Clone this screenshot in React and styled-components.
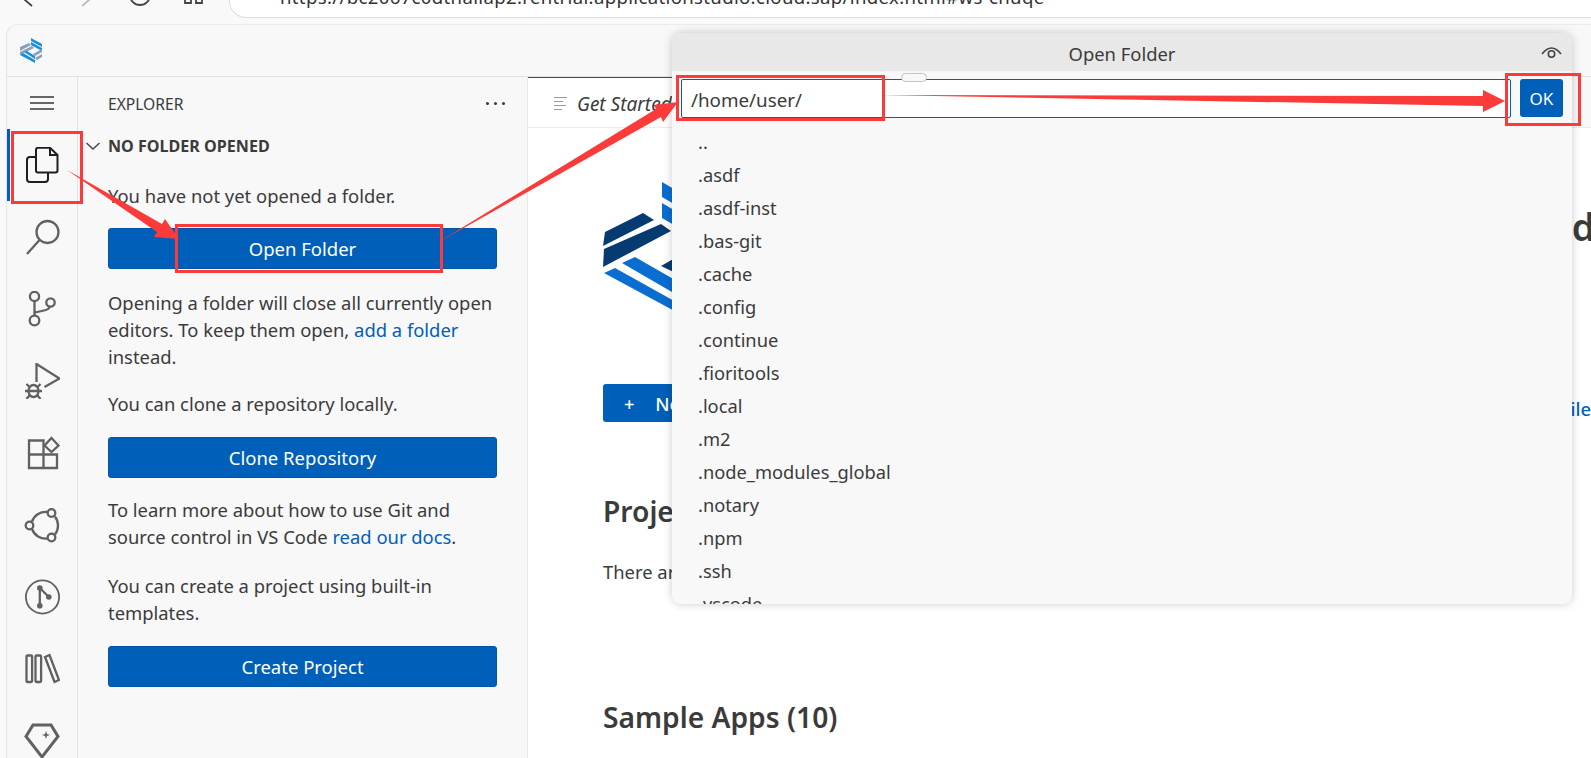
import React from "react";
import styled, { createGlobalStyle } from "styled-components";

const Global = createGlobalStyle`
  html, body { margin: 0; padding: 0; background: #f9f9f9; }
  body { font-family: "Noto Sans", "Open Sans", sans-serif; color: #3b3b3b; }
  * { box-sizing: border-box; }
`;

const Page = styled.div`
  position: relative;
  width: 1591px;
  height: 758px;
  overflow: hidden;
  display: flex;
  flex-direction: column;
  background: #f9f9f9;
`;

const BrowserBar = styled.div`
  height: 24px;
  flex: none;
  display: flex;
  align-items: flex-start;
  padding-left: 23px;
`;
const NavIcon = styled.svg`
  flex: none;
  width: 24px;
  height: 24px;
  margin-left: ${(p) => p.$gap || 0}px;
  margin-top: -12px;
  fill: none;
  stroke: ${(p) => p.$color || "#444"};
  stroke-width: 1.8;
`;
const UrlBar = styled.div`
  flex: none;
  margin-left: 23px;
  width: 1400px;
  height: 18px;
  background: #fff;
  border: 1px solid #dcdcdc;
  border-top: 0;
  border-right: 0;
  border-radius: 0 0 0 17px;
  overflow: hidden;
  display: flex;
  align-items: flex-end;
  padding: 0 0 8px 10px;
`;
const UrlIcon = styled.svg`
  flex: none;
  width: 20px;
  height: 20px;
  margin-bottom: -5px;
  fill: none;
  stroke: #444;
  stroke-width: 1.8;
`;
const UrlText = styled.span`
  margin-left: 20px;
  font-size: 18.6px;
  line-height: 24px;
  white-space: nowrap;
  color: #333;
  letter-spacing: 0.33px;
`;

const Frame = styled.div`
  flex: 1;
  min-height: 0;
  margin-left: 6px;
  border-top: 1px solid #ebebeb;
  border-left: 1px solid #e5e5e5;
  border-radius: 12px 0 0 0;
  background: #f8f8f8;
  display: flex;
  flex-direction: column;
  overflow: hidden;
`;
const TitleBar = styled.header`
  height: 52px;
  flex: none;
  display: flex;
  align-items: center;
  padding-left: 13px;
  border-bottom: 1px solid #e2e2e2;
`;
const Body = styled.div`
  flex: 1;
  min-height: 0;
  display: flex;
`;

const ActivityBar = styled.nav`
  width: 71px;
  flex: none;
  display: flex;
  flex-direction: column;
  border-right: 1px solid #e2e2e2;
`;
const MenuButton = styled.div`
  height: 52px;
  flex: none;
  display: flex;
  flex-direction: column;
  justify-content: center;
  gap: 4.5px;
  padding-left: 23px;
`;
const MenuLine = styled.span`
  display: block;
  width: 24px;
  height: 1.6px;
  background: #666;
`;
const ActivityItem = styled.div`
  height: 72px;
  flex: none;
  display: flex;
  align-items: center;
  justify-content: center;
  border-left: 3px solid ${(p) => (p.$active ? "#005fb8" : "transparent")};
  padding-right: 4px;
`;
const Icon = styled.svg`
  width: 36px;
  height: 36px;
  flex: none;
  fill: none;
  stroke: ${(p) => (p.$active ? "#1e1e1e" : "#616161")};
  stroke-width: ${(p) => (p.$active ? 2 : 2.3)};
`;

const Sidebar = styled.aside`
  width: 450px;
  flex: none;
  display: flex;
  flex-direction: column;
  border-right: 1px solid #e8e8e8;
`;
const SideHeader = styled.div`
  height: 53px;
  flex: none;
  display: flex;
  align-items: center;
  justify-content: space-between;
  padding: 0 22px 0 30px;
  font-size: 15.6px;
  color: #3b3b3b;
`;
const MoreDots = styled.span`
  display: flex;
  gap: 5px;
`;
const Dot = styled.i`
  width: 3px;
  height: 3px;
  border-radius: 50%;
  background: #3b3b3b;
`;
const SectionHead = styled.div`
  height: 30px;
  flex: none;
  display: flex;
  align-items: center;
  gap: 8px;
  padding: 2px 0 0 8px;
  font-size: 16.1px;
  font-weight: 700;
  color: #3b3b3b;
`;
const Chevron = styled.svg`
  width: 14px;
  height: 10px;
  fill: none;
  stroke: #444;
  stroke-width: 1.4;
`;
const SideContent = styled.div`
  display: flex;
  flex-direction: column;
  padding: 22px 30px 0 30px;
`;
const Para = styled.p`
  margin: 0 0 ${(p) => p.$mb}px;
  font-size: 18.4px;
  line-height: 27px;
  color: #3b3b3b;
`;
const Link = styled.a`
  color: #005fb8;
  text-decoration: none;
`;
const WideButton = styled.button`
  display: block;
  flex: none;
  width: 100%;
  height: 41px;
  margin: 0 0 ${(p) => p.$mb || 0}px;
  border: 1px solid #0057a8;
  border-radius: 3px;
  background: #005fb8;
  color: #fff;
  font: 400 18.5px "Noto Sans", sans-serif;
  padding: 0;
`;

const Editor = styled.main`
  flex: 1;
  min-width: 0;
  background: #fff;
  display: flex;
  flex-direction: column;
  overflow: hidden;
`;
const TabStrip = styled.div`
  height: 51px;
  flex: none;
  background: #f8f8f8;
  display: flex;
  border-bottom: 1px solid #ececec;
`;
const Tab = styled.div`
  width: 300px;
  background: #fff;
  border-top: 1px solid #005fb8;
  display: flex;
  align-items: center;
  gap: 10px;
  padding: 2px 0 0 26px;
  font-style: italic;
  font-size: 19px;
  color: #3b3b3b;
`;
const TabLines = styled.span`
  display: flex;
  flex-direction: column;
  gap: 2.5px;
`;
const TabLine = styled.i`
  display: block;
  height: 1.6px;
  width: ${(p) => p.$w}px;
  background: #999;
`;
const EditorBody = styled.div`
  padding: 48px 0 0 75px;
  display: flex;
  flex-direction: column;
`;
const Hero = styled.div`
  display: flex;
  align-items: flex-start;
  height: 208px;
`;
const HeroLogo = styled.svg`
  flex: none;
  width: 100px;
  height: 145px;
`;
const HeroTitle = styled.h1`
  margin: 26px 0 0 128px;
  font-size: 37px;
  font-weight: 600;
  line-height: 50px;
  white-space: nowrap;
  color: #3b3b3b;
`;
const ActionsRow = styled.div`
  display: flex;
  align-items: center;
  justify-content: space-between;
  height: 38px;
  width: 997px;
`;
const NewButton = styled.button`
  height: 38px;
  width: 240px;
  border: 0;
  border-radius: 3px;
  background: #005fb8;
  color: #fff;
  font: 500 18.4px "Noto Sans", sans-serif;
  text-align: left;
  padding: 0 0 0 21px;
  word-spacing: 16px;
`;
const FileLink = styled.a`
  margin-top: 10px;
  font-size: 18.4px;
  font-weight: 500;
  color: #005fb8;
  white-space: nowrap;
`;
const SectionTitle = styled.h2`
  margin: ${(p) => p.$top}px 0 0;
  font-size: 28.2px;
  line-height: 38px;
  font-weight: 600;
  color: #3b3b3b;
  white-space: nowrap;
`;
const BodyText = styled.p`
  margin: 28px 0 0;
  font-size: 18.4px;
  line-height: 27px;
  color: #3b3b3b;
`;

const Dialog = styled.section`
  position: absolute;
  left: 672px;
  top: 33px;
  width: 900px;
  height: 571px;
  background: #f8f8f8;
  border-radius: 9px;
  box-shadow: 0 0 10px rgba(0, 0, 0, 0.2);
  display: flex;
  flex-direction: column;
  overflow: hidden;
`;
const DialogTitle = styled.div`
  position: relative;
  height: 38px;
  flex: none;
  background: #e8e8e8;
  display: flex;
  align-items: center;
  justify-content: center;
  padding-top: 2px;
  font-size: 18.4px;
  color: #3b3b3b;
`;
const EyeIcon = styled.svg`
  position: absolute;
  right: 10px;
  top: 12px;
  width: 21px;
  height: 14px;
  fill: none;
  stroke: #444;
  stroke-width: 1.6;
`;
const Handle = styled.div`
  position: absolute;
  left: 229px;
  top: 40px;
  width: 26px;
  height: 9px;
  background: #f8f8f8;
  border: 1px solid #c4c4c4;
  border-radius: 5px;
`;
const InputRow = styled.div`
  flex: none;
  display: flex;
  gap: 9px;
  padding: 8px 9px 0;
`;
const PathInput = styled.div`
  flex: 1;
  height: 39px;
  background: #fff;
  border: 1px solid #005fb8;
  border-radius: 2px;
  display: flex;
  align-items: center;
  padding: 2px 0 0 9px;
  font-size: 18.8px;
  color: #3b3b3b;
`;
const OkButton = styled.button`
  flex: none;
  width: 43px;
  height: 38px;
  border: 0;
  border-radius: 3px;
  background: #005fb8;
  color: #fff;
  font: 400 17px "Noto Sans", sans-serif;
  padding: 0;
`;
const FolderList = styled.ul`
  list-style: none;
  margin: 6.5px 0 0;
  padding: 0;
  flex: 1;
  min-height: 0;
  overflow: hidden;
`;
const FolderRow = styled.li`
  height: 33px;
  line-height: 33px;
  padding-left: 26px;
  font-size: 18.3px;
  color: #3b3b3b;
`;

const Annotations = styled.svg`
  position: absolute;
  inset: 0;
  width: 1591px;
  height: 758px;
  pointer-events: none;
`;
const RedBox = styled.rect`
  fill: none;
  stroke: #fb3a3a;
  stroke-width: 3;
`;
const RedArrow = styled.polygon`
  fill: #fb3a3a;
`;

const TitleLogo = styled.svg`
  width: 25px;
  height: 26px;
`;

const folders = ["..", ".asdf", ".asdf-inst", ".bas-git", ".cache", ".config", ".continue", ".fioritools", ".local", ".m2", ".node_modules_global", ".notary", ".npm", ".ssh", ".vscode"];

export default function App() {
  return (
    <Page>
      <Global />
      <BrowserBar>
        <NavIcon viewBox="0 0 24 24"><path d="M9 6 L2 12 L9 18" /></NavIcon>
        <NavIcon $gap={31} $color="#bbb" viewBox="0 0 24 24"><path d="M4 6 L11 12 L4 18" /></NavIcon>
        <NavIcon $gap={26} viewBox="0 0 24 24"><circle cx="12" cy="7" r="10" /></NavIcon>
        <NavIcon $gap={30} viewBox="0 0 24 24"><path d="M3 4 V15 H9 V4 M14 4 V15 H20 V4" /></NavIcon>
        <UrlBar>
          <UrlIcon viewBox="0 0 20 20"><rect x="1" y="-6" width="17" height="11" rx="3" /></UrlIcon>
          <UrlText>https://bc2067c0dthaliap2.rentrial.applicationstudio.cloud.sap/index.html#ws-cnuqe</UrlText>
        </UrlBar>
      </BrowserBar>
      <Frame>
        <TitleBar>
          <TitleLogo viewBox="0 0 25 26">
            <polygon fill="#1a8fdc" points="11,0 22,6 22,9 11,3" />
            <polygon fill="#1a8fdc" points="11,4 22,10 22,13 11,7" />
            <polygon fill="#8aa0b8" points="0,9 9,5 11,7 0,13" />
            <polygon fill="#8aa0b8" points="0,14 12,8 14,10 0,17" />
            <polygon fill="#1a8fdc" points="0,17 3,15 15,22 15,25" />
            <polygon fill="#1a8fdc" points="4,14 7,13 15,18 15,21" />
            <polygon fill="#8aa0b8" points="13,16 22,11 22,14 15,18" />
            <polygon fill="#8aa0b8" points="15,20 22,16 22,19 17,22" />
          </TitleLogo>
        </TitleBar>
        <Body>
          <ActivityBar>
            <MenuButton><MenuLine /><MenuLine /><MenuLine /></MenuButton>
            <ActivityItem $active>
              <Icon $active viewBox="0 0 36 36">
                <path d="M14 0.8 H26 L33.5 8 V23.5 a2 2 0 0 1 -2 2 H14 a2 2 0 0 1 -2 -2 V2.8 a2 2 0 0 1 2 -2z" />
                <path d="M26 0.8 V8 H33.5" />
                <path d="M12 10 H6 a3 3 0 0 0 -3 3 V32 a3 3 0 0 0 3 3 H21 a3 3 0 0 0 3 -3 V25.5" />
              </Icon>
            </ActivityItem>
            <ActivityItem>
              <Icon viewBox="0 0 36 36">
                <circle cx="23.5" cy="13" r="11" />
                <path d="M15.5 21 L3 35" />
              </Icon>
            </ActivityItem>
            <ActivityItem>
              <Icon viewBox="0 0 36 36">
                <circle cx="10.5" cy="5.5" r="4.6" />
                <circle cx="26.5" cy="11.5" r="4.2" />
                <circle cx="10.5" cy="29.5" r="4.8" />
                <path d="M10.5 10 V24.5 M11 21.5 L20 19.5 Q25 18.5 26 15.5" />
              </Icon>
            </ActivityItem>
            <ActivityItem>
              <Icon viewBox="0 0 36 36">
                <path d="M12.5 19 V1 L35.5 15.5 L20.5 24" />
                <ellipse cx="9.5" cy="28" rx="5" ry="6" />
                <path d="M1 28 H18 M2.5 21 L5.5 24 M16.5 21 L13.5 24 M2.5 36 L5.5 32.5 M16.5 36 L13.5 32.5" />
              </Icon>
            </ActivityItem>
            <ActivityItem>
              <Icon viewBox="0 0 36 36">
                <path d="M5 5.5 H19.5 V33 H5 Z M5 19.5 H33 V33 H19.5" />
                <path d="M27.5 3 L34.5 10.5 L27.5 17 L20.5 10.5 Z" />
              </Icon>
            </ActivityItem>
            <ActivityItem>
              <Icon viewBox="0 0 36 36">
                <circle cx="27.5" cy="6" r="3.8" />
                <circle cx="5.5" cy="18.5" r="3.8" />
                <circle cx="27.5" cy="30.5" r="3.8" />
                <path d="M8 14.5 A14.5 14.5 0 0 1 23.5 5" />
                <path d="M31 9.5 A15 15 0 0 1 31 27.5" />
                <path d="M23.5 31.5 A14.5 14.5 0 0 1 8 22" />
              </Icon>
            </ActivityItem>
            <ActivityItem>
              <Icon viewBox="0 0 36 36">
                <circle cx="18.5" cy="18" r="16.6" strokeWidth="1.8" />
                <path d="M15.8 9 V26.7 M15.8 9 L24.8 18" />
                <circle cx="15.8" cy="9" r="2.8" fill="#616161" stroke="none" />
                <circle cx="24.8" cy="18" r="2.8" fill="#616161" stroke="none" />
                <circle cx="15.8" cy="26.7" r="2.8" fill="#616161" stroke="none" />
              </Icon>
            </ActivityItem>
            <ActivityItem>
              <Icon viewBox="0 0 36 36">
                <rect x="2.5" y="4.5" width="5.6" height="26.5" rx="1" />
                <rect x="11.5" y="4.5" width="5.6" height="26.5" rx="1" />
                <polygon points="21,6 25.5,4 35,29 30.5,31" />
              </Icon>
            </ActivityItem>
            <ActivityItem>
              <Icon viewBox="0 0 36 36">
                <path d="M9 2 H27 L34 13.5 L18 34 L2 13.5 Z" strokeWidth="3" />
                <path d="M22 8 L23 11 L26 12 L23 13 L22 16 L21 13 L18 12 L21 11 Z" fill="#616161" stroke="none" />
              </Icon>
            </ActivityItem>
          </ActivityBar>
          <Sidebar>
            <SideHeader>
              <span>EXPLORER</span>
              <MoreDots><Dot /><Dot /><Dot /></MoreDots>
            </SideHeader>
            <SectionHead>
              <Chevron viewBox="0 0 14 10"><path d="M0.5 2 L7 8 L13.5 2" /></Chevron>
              NO FOLDER OPENED
            </SectionHead>
            <SideContent>
              <Para $mb={19}>You have not yet opened a folder.</Para>
              <WideButton $mb={20}>Open Folder</WideButton>
              <Para $mb={20}>Opening a folder will close all currently open editors. To keep them open, <Link>add a folder</Link> instead.</Para>
              <Para $mb={20}>You can clone a repository locally.</Para>
              <WideButton $mb={18}>Clone Repository</WideButton>
              <Para $mb={22}>To learn more about how to use Git and source control in VS Code <Link>read our docs</Link>.</Para>
              <Para $mb={20}>You can create a project using built-in templates.</Para>
              <WideButton>Create Project</WideButton>
            </SideContent>
          </Sidebar>
          <Editor>
            <TabStrip>
              <Tab>
                <TabLines><TabLine $w={13} /><TabLine $w={9} /><TabLine $w={12} /><TabLine $w={8} /></TabLines>
                Get Started
              </Tab>
            </TabStrip>
            <EditorBody>
              <Hero>
                <HeroLogo viewBox="0 0 100 145">
                  <polygon fill="#053b70" points="2,56 40,37 51,44 0,70" />
                  <polygon fill="#053b70" points="1,73 58,48 68,55 0,91" />
                  <polygon fill="#0a6ed1" points="1,97 12,92 100,141 100,145 90,145" />
                  <polygon fill="#0a6ed1" points="19,87 32,81 100,120 100,134" />
                  <polygon fill="#053b70" points="58,90 100,66 100,110" />
                  <polygon fill="#0a6ed1" points="59,6 100,30 100,45 59,21" />
                  <polygon fill="#0a6ed1" points="59,27 100,51 100,66 59,42" />
                </HeroLogo>
                <HeroTitle>Welcome to SAP Business Application Studio</HeroTitle>
              </Hero>
              <ActionsRow>
                <NewButton>+ New Project</NewButton>
                <FileLink>Browse Files</FileLink>
              </ActionsRow>
              <SectionTitle $top={70}>Projects (0)</SectionTitle>
              <BodyText>There are no projects in this workspace yet.</BodyText>
              <SectionTitle $top={113}>Sample Apps (10)</SectionTitle>
            </EditorBody>
          </Editor>
        </Body>
      </Frame>
      <Dialog>
        <DialogTitle>
          Open Folder
          <EyeIcon viewBox="0 0 21 14">
            <path d="M1 9 Q10.5 -3 20 9" />
            <circle cx="10.5" cy="9" r="3.2" />
          </EyeIcon>
        </DialogTitle>
        <Handle />
        <InputRow>
          <PathInput>/home/user/</PathInput>
          <OkButton>OK</OkButton>
        </InputRow>
        <FolderList>
          {folders.map((f) => <FolderRow key={f}>{f}</FolderRow>)}
        </FolderList>
      </Dialog>
      <Annotations viewBox="0 0 1591 758">
        <RedBox x="12.5" y="132.5" width="69" height="70" />
        <RedBox x="176.5" y="225.5" width="265" height="46" />
        <RedBox x="677.5" y="76.5" width="206" height="43" />
        <RedBox x="1506.5" y="74.5" width="73" height="50" />
        <RedArrow points="67,170 162,224 165,219 179,239 154,237 157,232" />
        <RedArrow points="437,243 656,109 654,105 678,102 663,122 661,117" />
        <RedArrow points="879,95 1483,96 1483,90 1505,101 1483,112 1483,106" />
      </Annotations>
    </Page>
  );
}
